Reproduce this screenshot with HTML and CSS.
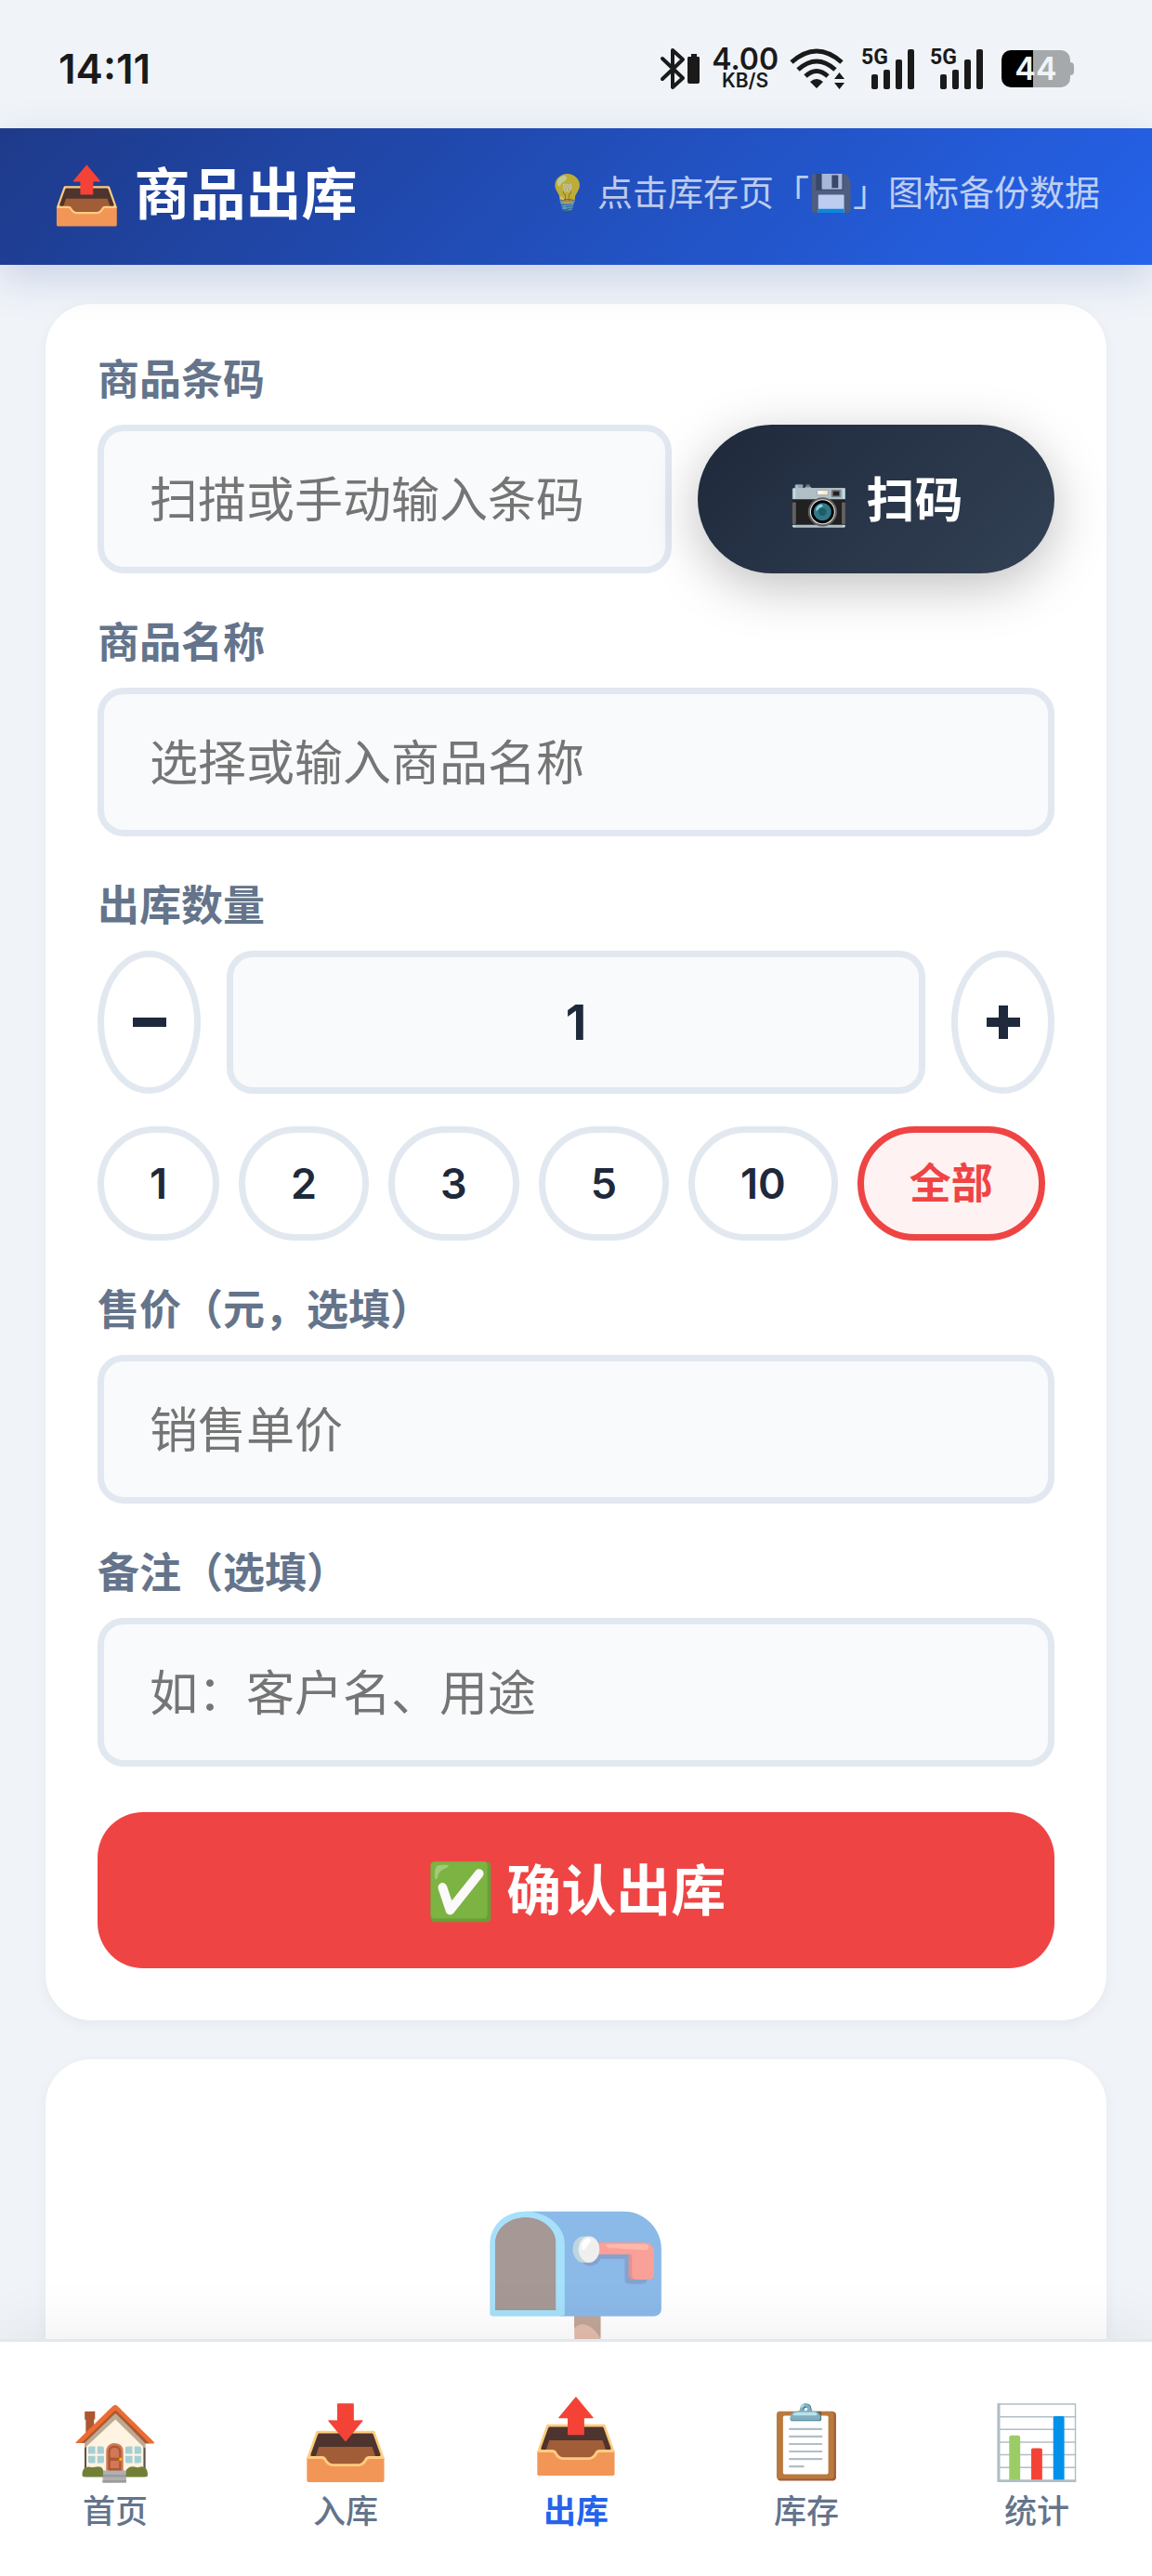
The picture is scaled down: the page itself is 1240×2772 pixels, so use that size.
FILE: index.html
```html
<!DOCTYPE html>
<html lang="zh-CN">
<head>
<meta charset="utf-8">
<meta name="viewport" content="width=device-width, initial-scale=1">
<title>商品出库</title>
<link rel="stylesheet" href="styles.css">
</head>
<body>
<div class="app">
  <div class="status">
    <span class="clock">14:11</span>
    <div class="status-icons">
      <svg width="44" height="46" viewBox="0 0 44 46" fill="none" stroke="#1a1a1a" stroke-width="4" stroke-linejoin="round" stroke-linecap="round"><path d="M3 12 25 33 14 43V3L25 13 3 34"/><path d="M31 10h3V7h6v3h2q1 0 1 2v25q0 2-2 2H32q-2 0-2-2V12q0-2 1-2Z" fill="#1a1a1a" stroke="none"/></svg>
      <span class="speed"><b>4.00</b><small>KB/S</small></span>
      <svg width="60" height="46" viewBox="0 0 60 46" fill="none" stroke="#1a1a1a" stroke-width="5"><path d="M2 16Q29-8 56 16M9 24Q29 6 49 24M17 31Q29 20 41 31"/><path d="M29 44l-7-7q7-6 14 0ZM48 34l5.500-7 5.500 7ZM48 38h11l-5.500 7Z" fill="#1a1a1a" stroke="none"/></svg>
      <span class="signal"><b>5G</b><i></i><i></i><i></i><i></i></span>
      <span class="signal"><b>5G</b><i></i><i></i><i></i><i></i></span>
      <span class="battery">44</span>
    </div>
  </div>

  <header class="header">
    <h1>📤 商品出库</h1>
    <span class="hint">💡 点击库存页「💾」图标备份数据</span>
  </header>

  <main class="main">
    <form class="card">
      <div class="field">
        <label for="code">商品条码</label>
        <div class="row">
          <input id="code" class="input" type="text" placeholder="扫描或手动输入条码">
          <button type="button" class="scan"><span>📷</span><span>扫码</span></button>
        </div>
      </div>
      <div class="field">
        <label for="name">商品名称</label>
        <input id="name" class="input" type="text" placeholder="选择或输入商品名称">
      </div>
      <div class="field">
        <label for="qty">出库数量</label>
        <div class="row">
          <button type="button" class="step" aria-label="减少"><svg width="38" height="38" viewBox="0 0 38 38"><path d="M1 14h36v10H1z"/></svg></button>
          <input id="qty" class="input qty" type="text" inputmode="numeric" value="1">
          <button type="button" class="step" aria-label="增加"><svg width="38" height="38" viewBox="0 0 38 38"><path d="M1 14h13V1h10v13h13v10H24v13H14V24H1z"/></svg></button>
        </div>
        <div class="chips">
          <button type="button" class="chip">1</button>
          <button type="button" class="chip">2</button>
          <button type="button" class="chip">3</button>
          <button type="button" class="chip">5</button>
          <button type="button" class="chip">10</button>
          <button type="button" class="chip all">全部</button>
        </div>
      </div>
      <div class="field">
        <label for="price">售价（元，选填）</label>
        <input id="price" class="input" type="text" placeholder="销售单价">
      </div>
      <div class="field">
        <label for="note">备注（选填）</label>
        <input id="note" class="input" type="text" placeholder="如：客户名、用途">
      </div>
      <button type="submit" class="submit">✅ 确认出库</button>
    </form>
    <section class="card empty">
      <div class="mailbox">📭</div>
    </section>
  </main>

  <nav class="nav">
    <a href="#home"><span class="ico">🏠</span>首页</a>
    <a href="#in"><span class="ico">📥</span>入库</a>
    <a href="#out" class="active"><span class="ico">📤</span>出库</a>
    <a href="#stock"><span class="ico">📋</span>库存</a>
    <a href="#stats"><span class="ico">📊</span>统计</a>
  </nav>
</div>
</body>
</html>
```
FILE: styles.css
```css
* { box-sizing: border-box; }
body {
  margin: 0;
  background: #f0f4f9;
  color: #1e293b;
  font-family: "Noto Sans CJK SC", sans-serif;
}
button, input { font: inherit; color: inherit; margin: 0; }
svg { display: block; flex: none; }

.app { display: flex; flex-direction: column; height: 100vh; overflow: hidden; }

.status {
  flex: none;
  display: flex;
  align-items: center;
  justify-content: space-between;
  height: 138px;
  padding: 10px 88px 0 63px;
  color: #1a1a1a;
  font-family: Inter, sans-serif;
}
.clock { font-size: 44px; font-weight: 600; line-height: 48px; }
.status-icons { display: flex; align-items: center; gap: 12px; }
.speed { display: flex; flex-direction: column; align-items: center; }
.speed b { font-size: 32px; line-height: 26px; font-weight: 600; }
.speed small { font-size: 21px; line-height: 20px; font-weight: 600; }
.signal {
  position: relative;
  display: flex;
  align-items: flex-end;
  gap: 6px;
  height: 44px;
  padding-left: 11px;
  margin-left: 5px;
}
.signal b { position: absolute; left: 0; top: 0; font: 700 23px/20px Roboto, sans-serif; }
.signal i { width: 7px; border-radius: 2px; background: #1a1a1a; height: 16px; }
.signal i:nth-of-type(2) { height: 21px; }
.signal i:nth-of-type(3) { height: 32px; }
.signal i:nth-of-type(4) { height: 43px; }
.battery {
  position: relative;
  width: 74px;
  height: 40px;
  margin-left: 8px;
  border-radius: 10px;
  background: linear-gradient(90deg, #000 46%, #a6a9ab 46%);
  color: #f0f4f9;
  font-size: 34px;
  font-weight: 600;
  line-height: 40px;
  text-align: center;
}
.battery::after {
  content: "";
  position: absolute;
  right: -4px;
  top: 13px;
  width: 4px;
  height: 14px;
  border-radius: 0 4px 4px 0;
  background: #a6a9ab;
}

.header {
  flex: none;
  position: relative;
  z-index: 1;
  display: flex;
  align-items: center;
  justify-content: space-between;
  height: 147px;
  padding: 0 56px 14px;
  background: linear-gradient(135deg, #1e3a8a, #2563eb);
  box-shadow: 0 14px 42px rgba(30, 58, 138, 0.18);
  color: #fff;
}
h1 { margin: 0; font-size: 60px; line-height: 84px; font-weight: 700; }
.hint { font-size: 38px; line-height: 56px; opacity: 0.7; }

.main { flex: 1; min-height: 0; padding: 42px 49px; overflow: hidden; }
.card {
  padding: 56px;
  margin-bottom: 42px;
  border-radius: 49px;
  background: #fff;
  box-shadow: 0 4px 14px rgba(15, 23, 42, 0.05);
}
.field { margin-bottom: 49px; }
.field label {
  display: block;
  margin-bottom: 28px;
  color: #64748b;
  font-size: 45px;
  line-height: 46px;
  font-weight: 700;
}
.row { display: flex; gap: 28px; }
.input {
  display: block;
  flex: 1;
  width: 100%;
  min-width: 0;
  height: 160px;
  padding: 0 49px 6px;
  border: 7px solid #e2e8f0;
  border-radius: 28px;
  background: #f8fafc;
  font-size: 52px;
}
.input::placeholder { color: #757575; opacity: 1; }
.input.qty { height: 154px; padding-bottom: 0; text-align: center; font-family: Inter, sans-serif; font-weight: 700; font-size: 52px; }
.scan {
  flex: none;
  display: flex;
  align-items: center;
  justify-content: center;
  gap: 18px;
  width: 384px;
  padding: 0 0 6px;
  border: 0;
  border-radius: 80px;
  background: linear-gradient(135deg, #1e293b, #334155);
  box-shadow: 0 14px 56px rgba(0, 0, 0, 0.25);
  color: #fff;
  font-size: 52px;
  font-weight: 700;
}
.step {
  flex: none;
  display: flex;
  align-items: center;
  justify-content: center;
  width: 111px;
  padding: 0;
  border: 7px solid #e2e8f0;
  border-radius: 50%;
  background: #fff;
}
.step svg { fill: #1e293b; }
.chips { display: flex; gap: 21px; margin-top: 35px; }
.chip {
  height: 123px;
  padding: 0 49px;
  border: 7px solid #e2e8f0;
  border-radius: 62px;
  background: #fff;
  font-family: Inter, "Noto Sans CJK SC", sans-serif;
  font-size: 45px;
  font-weight: 600;
}
.chip.all { padding-bottom: 6px; border-color: #ef4444; background: #fef2f2; color: #ef4444; font-weight: 700; }
.submit {
  width: 100%;
  height: 168px;
  padding: 0 0 8px;
  border: 0;
  border-radius: 49px;
  background: #ef4444;
  color: #fff;
  font-size: 59px;
  font-weight: 700;
}
.empty { height: 700px; padding-top: 124px; text-align: center; }
.mailbox { font-family: "Noto Color Emoji", sans-serif; font-size: 168px; line-height: 200px; opacity: 0.5; }

.nav {
  flex: none;
  position: relative;
  z-index: 1;
  display: grid;
  grid-template-columns: repeat(5, 1fr);
  height: 255px;
  padding-top: 62px;
  border-top: 3px solid #e2e8f0;
  background: #fff;
  box-shadow: 0 -14px 56px rgba(0, 0, 0, 0.06);
}
.nav a {
  display: flex;
  flex-direction: column;
  align-items: center;
  color: #64748b;
  font-size: 35px;
  line-height: 48px;
  font-weight: 500;
  text-decoration: none;
}
.ico { font-family: "Noto Color Emoji", sans-serif; font-size: 77px; line-height: 94px; }
.nav .active { color: #2563eb; font-weight: 700; }
.active .ico { margin-top: -7px; padding-bottom: 7px; }
```
